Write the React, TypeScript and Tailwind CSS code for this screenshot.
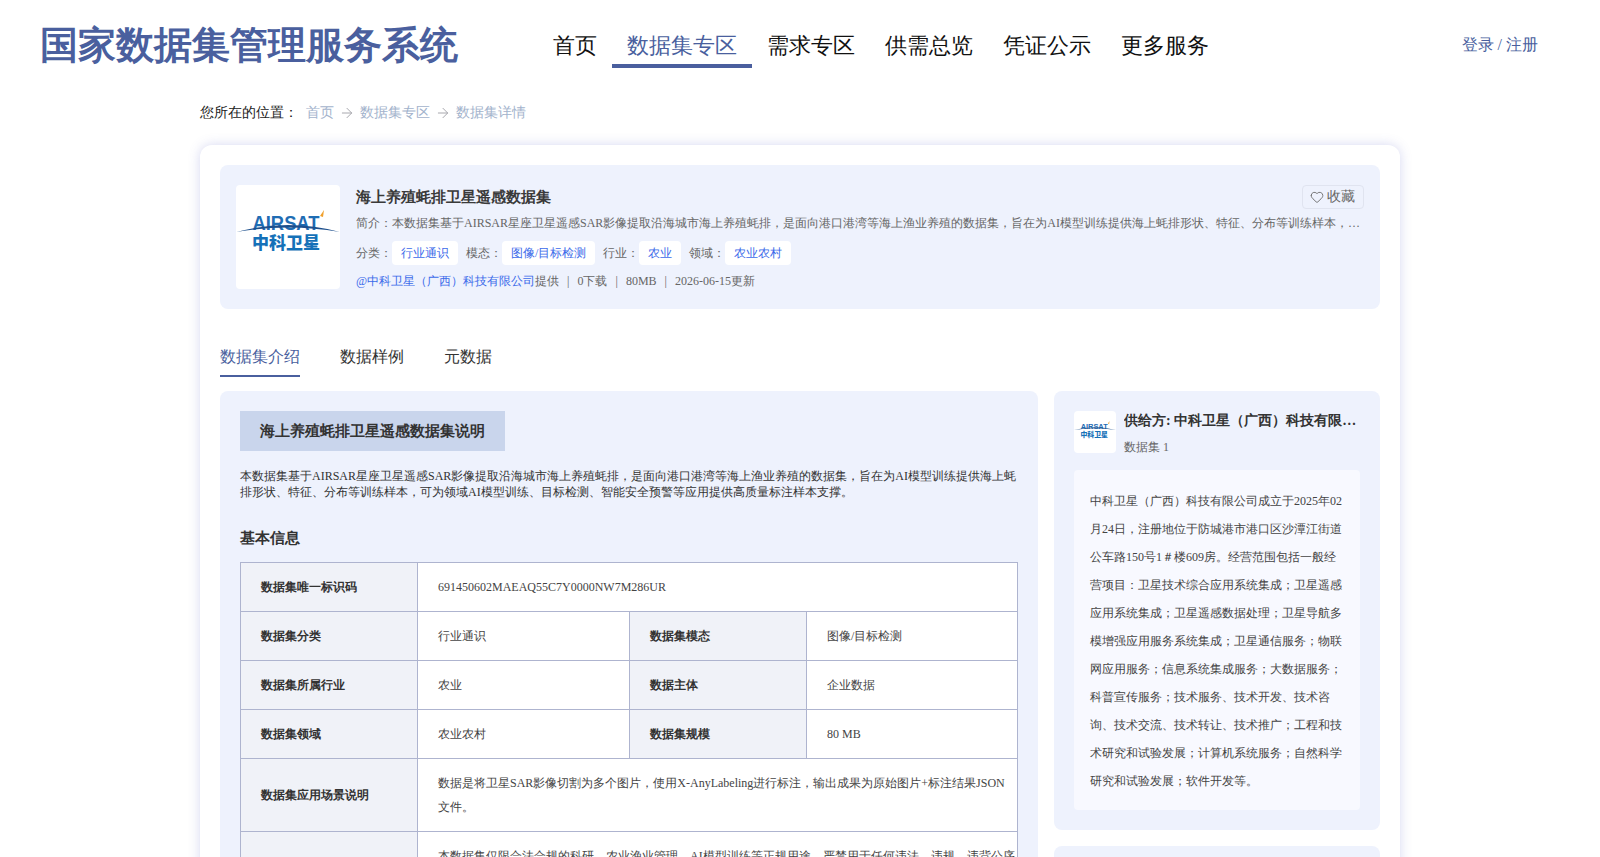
import React from "react";
import { Heart, ArrowRight } from "lucide-react";

const brand = "text-[#4a5f9e]";
const fontClass = "font-['Liberation_Serif',serif]";

function Logo({ size }: { size: number }) {
  return (
    <svg width={size} height={size} viewBox="0 0 104 104" role="img" aria-label="AIRSAT 中科卫星">
      <text x="50" y="45" textAnchor="middle" fontSize="20" fontWeight="700" fill="#1f6db4" fontFamily="'Liberation Sans',sans-serif" textLength="67" lengthAdjust="spacingAndGlyphs">AIRSAT</text>
      <path d="M0 47 Q52 33 104 47 Q52 38 0 47Z" fill="#1d4f8c" />
      <path d="M84 31 L88 25 L87 32 Z" fill="#f0a02c" />
      <text x="50" y="64" textAnchor="middle" fontSize="17" fontWeight="900" fill="#1571b8" fontFamily="'Noto Sans CJK SC',sans-serif">中科卫星</text>
    </svg>
  );
}

function Tag({ children }: { children: React.ReactNode }) {
  return <span className="h-6 px-[9px] flex items-center bg-white rounded text-[#3c6bea] mr-2">{children}</span>;
}

function Th({ children }: { children: React.ReactNode }) {
  return <th className="border border-[#aeb4cf] bg-[#f0f2f8] px-5 text-left font-bold text-[#333333] text-xs">{children}</th>;
}
function Td({ children, colSpan }: { children: React.ReactNode; colSpan?: number }) {
  return <td colSpan={colSpan} className="border border-[#aeb4cf] bg-white pl-5 pr-[2px] py-3 text-[#444444] text-xs leading-6">{children}</td>;
}

export default function App() {
  const nav = ["首页", "数据集专区", "需求专区", "供需总览", "凭证公示", "更多服务"];
  return (
    <div className={`h-[857px] overflow-hidden bg-white ${fontClass}`}>
      <header className="h-[92px] flex items-start pl-10 pr-[62px] pt-[22px]">
        <h1 className={`w-[498px] text-[38px] leading-[46px] font-bold ${brand}`}>国家数据集管理服务系统</h1>
        <nav className="flex flex-1">
          {nav.map((n, i) => (
            <a key={n} className={`h-[46px] px-[15px] text-[22px] leading-[48px] ${i === 1 ? `${brand} border-b-4 border-[#4a5f9e]` : "text-[#111111]"}`}>{n}</a>
          ))}
        </nav>
        <a className={`text-base leading-[46px] ${brand}`}>登录 / 注册</a>
      </header>

      <div className="w-[1200px] ml-[200px] h-[53px] flex items-center text-sm pb-[11px] text-[#a3b3cc]">
        <span className="w-[106px] text-[#222222]">您所在的位置：</span>
        <span>首页</span>
        <ArrowRight size={16} strokeWidth={1.5} className="mx-[5px] text-[#a8a8ae]" />
        <span>数据集专区</span>
        <ArrowRight size={16} strokeWidth={1.5} className="mx-[5px] text-[#a8a8ae]" />
        <span>数据集详情</span>
      </div>

      <main className="w-[1200px] ml-[200px] rounded-xl bg-white p-5 shadow-[0_0_12px_rgba(90,100,200,0.25)]">
        <section className="h-[144px] rounded-lg bg-[#eef2fd] px-4 py-5 flex">
          <div className="w-[104px] h-[104px] rounded bg-white shrink-0"><Logo size={104} /></div>
          <div className="ml-4 flex-1 min-w-0 text-xs text-[#666666]">
            <div className="h-6 flex items-center justify-between">
              <h2 className="pt-[2px] text-[15px] font-bold text-[#3a3a3a]">海上养殖蚝排卫星遥感数据集</h2>
              <button className="h-6 w-[62px] pr-[2px] rounded border border-[#e0e4f0] flex items-center justify-center gap-[3px] text-sm text-[#666666]">
                <Heart size={14} strokeWidth={1.5} />收藏
              </button>
            </div>
            <p className="mt-[6px] leading-4 truncate w-[1008px]">简介：本数据集基于AIRSAR星座卫星遥感SAR影像提取沿海城市海上养殖蚝排，是面向港口港湾等海上渔业养殖的数据集，旨在为AI模型训练提供海上蚝排形状、特征、分布等训练样本，可为领域AI模型训练、目标检测、智能安全预警等应用提供高质量标注样本支撑。</p>
            <div className="mt-[10px] flex items-center">
              <span>分类：</span><Tag>行业通识</Tag>
              <span>模态：</span><Tag>图像/目标检测</Tag>
              <span>行业：</span><Tag>农业</Tag>
              <span>领域：</span><Tag>农业农村</Tag>
            </div>
            <div className="mt-2 leading-4">
              <span className="text-[#3c6bea]">@中科卫星（广西）科技有限公司</span>提供<span className="mx-2">|</span>0下载<span className="mx-2">|</span>80MB<span className="mx-2">|</span>2026-06-15更新
            </div>
          </div>
        </section>

        <div className="mt-[27px] h-[40px] flex gap-10 text-base leading-[42px] text-[#333333]">
          <a className={`${brand} h-[41px] border-b-2 border-[#4a5f9e]`}>数据集介绍</a>
          <a>数据样例</a>
          <a>元数据</a>
        </div>

        <div className="mt-[15px] flex gap-4 items-start">
          <section className="w-[818px] shrink-0 rounded-lg bg-[#eef2fd] p-5">
            <h3 className="w-[265px] h-10 bg-[#c9d5ec] flex items-center justify-center text-[15px] font-bold text-[#333333]">海上养殖蚝排卫星遥感数据集说明</h3>
            <p className="mt-[17px] text-xs leading-4 text-[#333333]">本数据集基于AIRSAR星座卫星遥感SAR影像提取沿海城市海上养殖蚝排，是面向港口港湾等海上渔业养殖的数据集，旨在为AI模型训练提供海上蚝排形状、特征、分布等训练样本，可为领域AI模型训练、目标检测、智能安全预警等应用提供高质量标注样本支撑。</p>
            <h4 className="mt-[28px] text-[15px] leading-5 font-bold text-[#333333]">基本信息</h4>
            <table className="mt-[14px] w-[777px] table-fixed border-collapse">
              <colgroup><col className="w-[177px]" /><col className="w-[212px]" /><col className="w-[177px]" /><col className="w-[211px]" /></colgroup>
              <tbody>
                <tr className="h-[49px]"><Th>数据集唯一标识码</Th><Td colSpan={3}>691450602MAEAQ55C7Y0000NW7M286UR</Td></tr>
                <tr className="h-[49px]"><Th>数据集分类</Th><Td>行业通识</Td><Th>数据集模态</Th><Td>图像/目标检测</Td></tr>
                <tr className="h-[49px]"><Th>数据集所属行业</Th><Td>农业</Td><Th>数据主体</Th><Td>企业数据</Td></tr>
                <tr className="h-[49px]"><Th>数据集领域</Th><Td>农业农村</Td><Th>数据集规模</Th><Td>80 MB</Td></tr>
                <tr><Th>数据集应用场景说明</Th><Td colSpan={3}>数据是将卫星SAR影像切割为多个图片，使用X-AnyLabeling进行标注，输出成果为原始图片+标注结果JSON文件。</Td></tr>
                <tr><Th>数据集使用限制</Th><Td colSpan={3}>本数据集仅限合法合规的科研、农业渔业管理、AI模型训练等正规用途，严禁用于任何违法、违规、违背公序良俗的活动，使用时须遵守国家相关法律法规。</Td></tr>
              </tbody>
            </table>
          </section>

          <aside className="w-[326px] flex flex-col gap-4">
            <section className="rounded-lg bg-[#eef2fd] p-5">
              <div className="flex gap-2 h-[42px]">
                <div className="w-[42px] h-[42px] rounded bg-white shrink-0"><Logo size={42} /></div>
                <div className="min-w-0 flex-1">
                  <div className="pt-[2px] text-sm leading-4 font-bold text-[#333333] truncate">供给方: 中科卫星（广西）科技有限公司</div>
                  <div className="mt-[10px] text-xs leading-4 text-[#666666]">数据集 1</div>
                </div>
              </div>
              <div className="mt-[17px] rounded bg-[#f8f9ff] px-4 pt-[17px] pb-[15px] text-xs leading-7 text-[#444444]">中科卫星（广西）科技有限公司成立于2025年02月24日，注册地位于防城港市港口区沙潭江街道公车路150号1＃楼609房。经营范围包括一般经营项目：卫星技术综合应用系统集成；卫星遥感应用系统集成；卫星遥感数据处理；卫星导航多模增强应用服务系统集成；卫星通信服务；物联网应用服务；信息系统集成服务；大数据服务；科普宣传服务；技术服务、技术开发、技术咨询、技术交流、技术转让、技术推广；工程和技术研究和试验发展；计算机系统服务；自然科学研究和试验发展；软件开发等。</div>
            </section>
            <section className="h-[120px] rounded-lg bg-[#eef2fd]" />
          </aside>
        </div>
      </main>
    </div>
  );
}
